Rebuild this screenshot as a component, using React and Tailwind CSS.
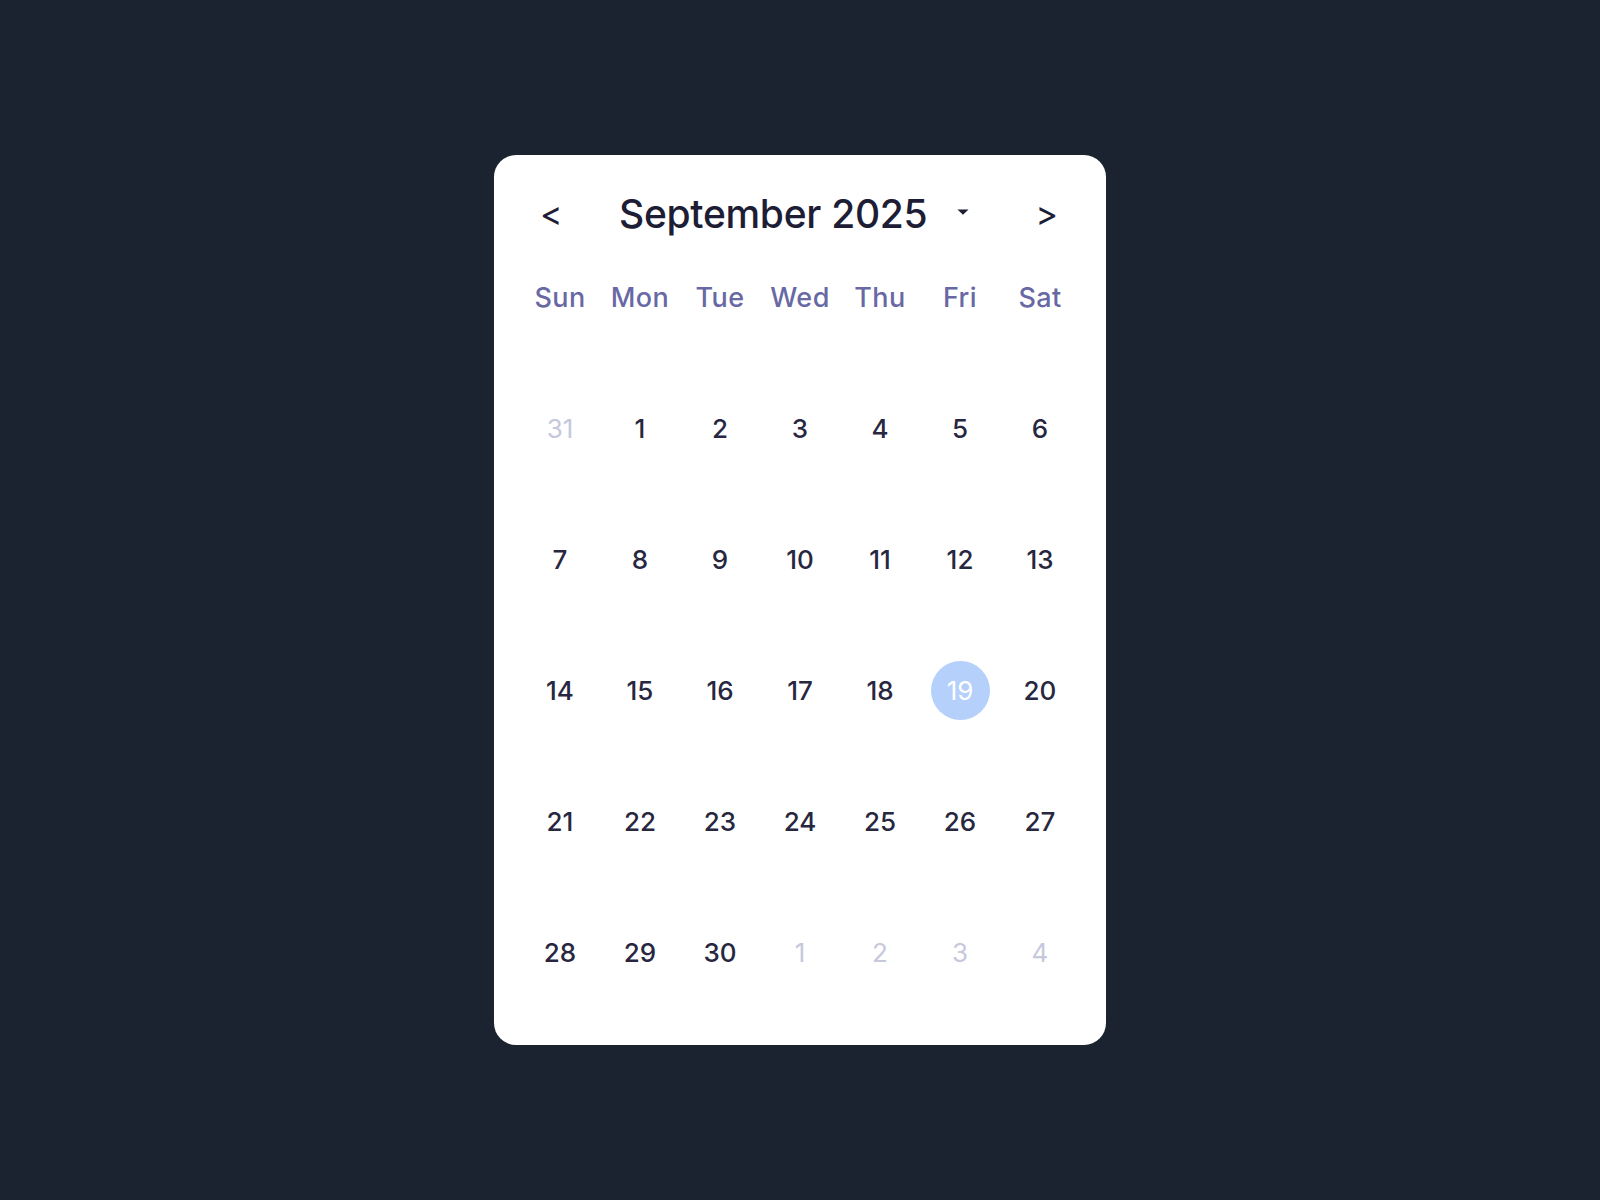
import { useState } from "react";

const weekdays = ["Sun", "Mon", "Tue", "Wed", "Thu", "Fri", "Sat"];

// September 2025 starts on a Monday, so the grid opens with Aug 31
const buildWeeks = () => {
  const cells = [{ day: 31, outside: true }];
  for (let d = 1; d <= 30; d++) cells.push({ day: d, outside: false });
  for (let d = 1; d <= 4; d++) cells.push({ day: d, outside: true });
  const weeks = [];
  for (let i = 0; i < cells.length; i += 7) weeks.push(cells.slice(i, i + 7));
  return weeks;
};

export default function App() {
  const [selected, setSelected] = useState(19);
  const weeks = buildWeeks();

  return (
    <div className="flex min-h-screen items-center justify-center bg-[#1b2330] font-['Inter','Noto_Sans',sans-serif]">
      <div className="w-[612px] rounded-[22px] bg-white px-[26px] pt-[26px] pb-[27px]">
        <div className="flex h-[66px] items-center text-[#1d1d35]">
          <button className="w-[64px] pl-[20px] text-left text-[34px] leading-none">&lt;</button>
          <span className="ml-[35px] text-[39px] font-medium tracking-[-0.3px]">September 2025</span>
          <svg width="12" height="6" viewBox="0 0 12 6" className="ml-[30px] mt-[-4px]">
            <path d="M0.5 0.5h11L6 5.8z" fill="#1d1d35" />
          </svg>
          <button className="ml-auto mr-[22px] text-[34px] leading-none">&gt;</button>
        </div>

        <div className="mt-[31px] grid h-[40px] grid-cols-7 items-center text-center text-[27px] font-medium tracking-[0.4px] text-[#6868a4]">
          {weekdays.map((w) => (
            <span key={w}>{w}</span>
          ))}
        </div>

        <div className="mt-[45px]">
          {weeks.map((week, i) => (
            <div key={i} className="grid h-[131px] grid-cols-7 items-center">
              {week.map((c, j) => {
                const isSel = !c.outside && c.day === selected;
                return (
                  <div key={j} className="flex justify-center">
                    <button
                      onClick={() => !c.outside && setSelected(c.day)}
                      className={
                        isSel
                          ? "flex h-[59px] w-[59px] items-center justify-center rounded-full bg-[#b4d0fb] text-[26px] text-white"
                          : c.outside
                          ? "flex h-[59px] w-[59px] items-center justify-center text-[26px] text-[#c6c8dc]"
                          : "flex h-[59px] w-[59px] items-center justify-center text-[26px] font-medium text-[#27273f]"
                      }
                    >
                      {c.day}
                    </button>
                  </div>
                );
              })}
            </div>
          ))}
        </div>
      </div>
    </div>
  );
}
